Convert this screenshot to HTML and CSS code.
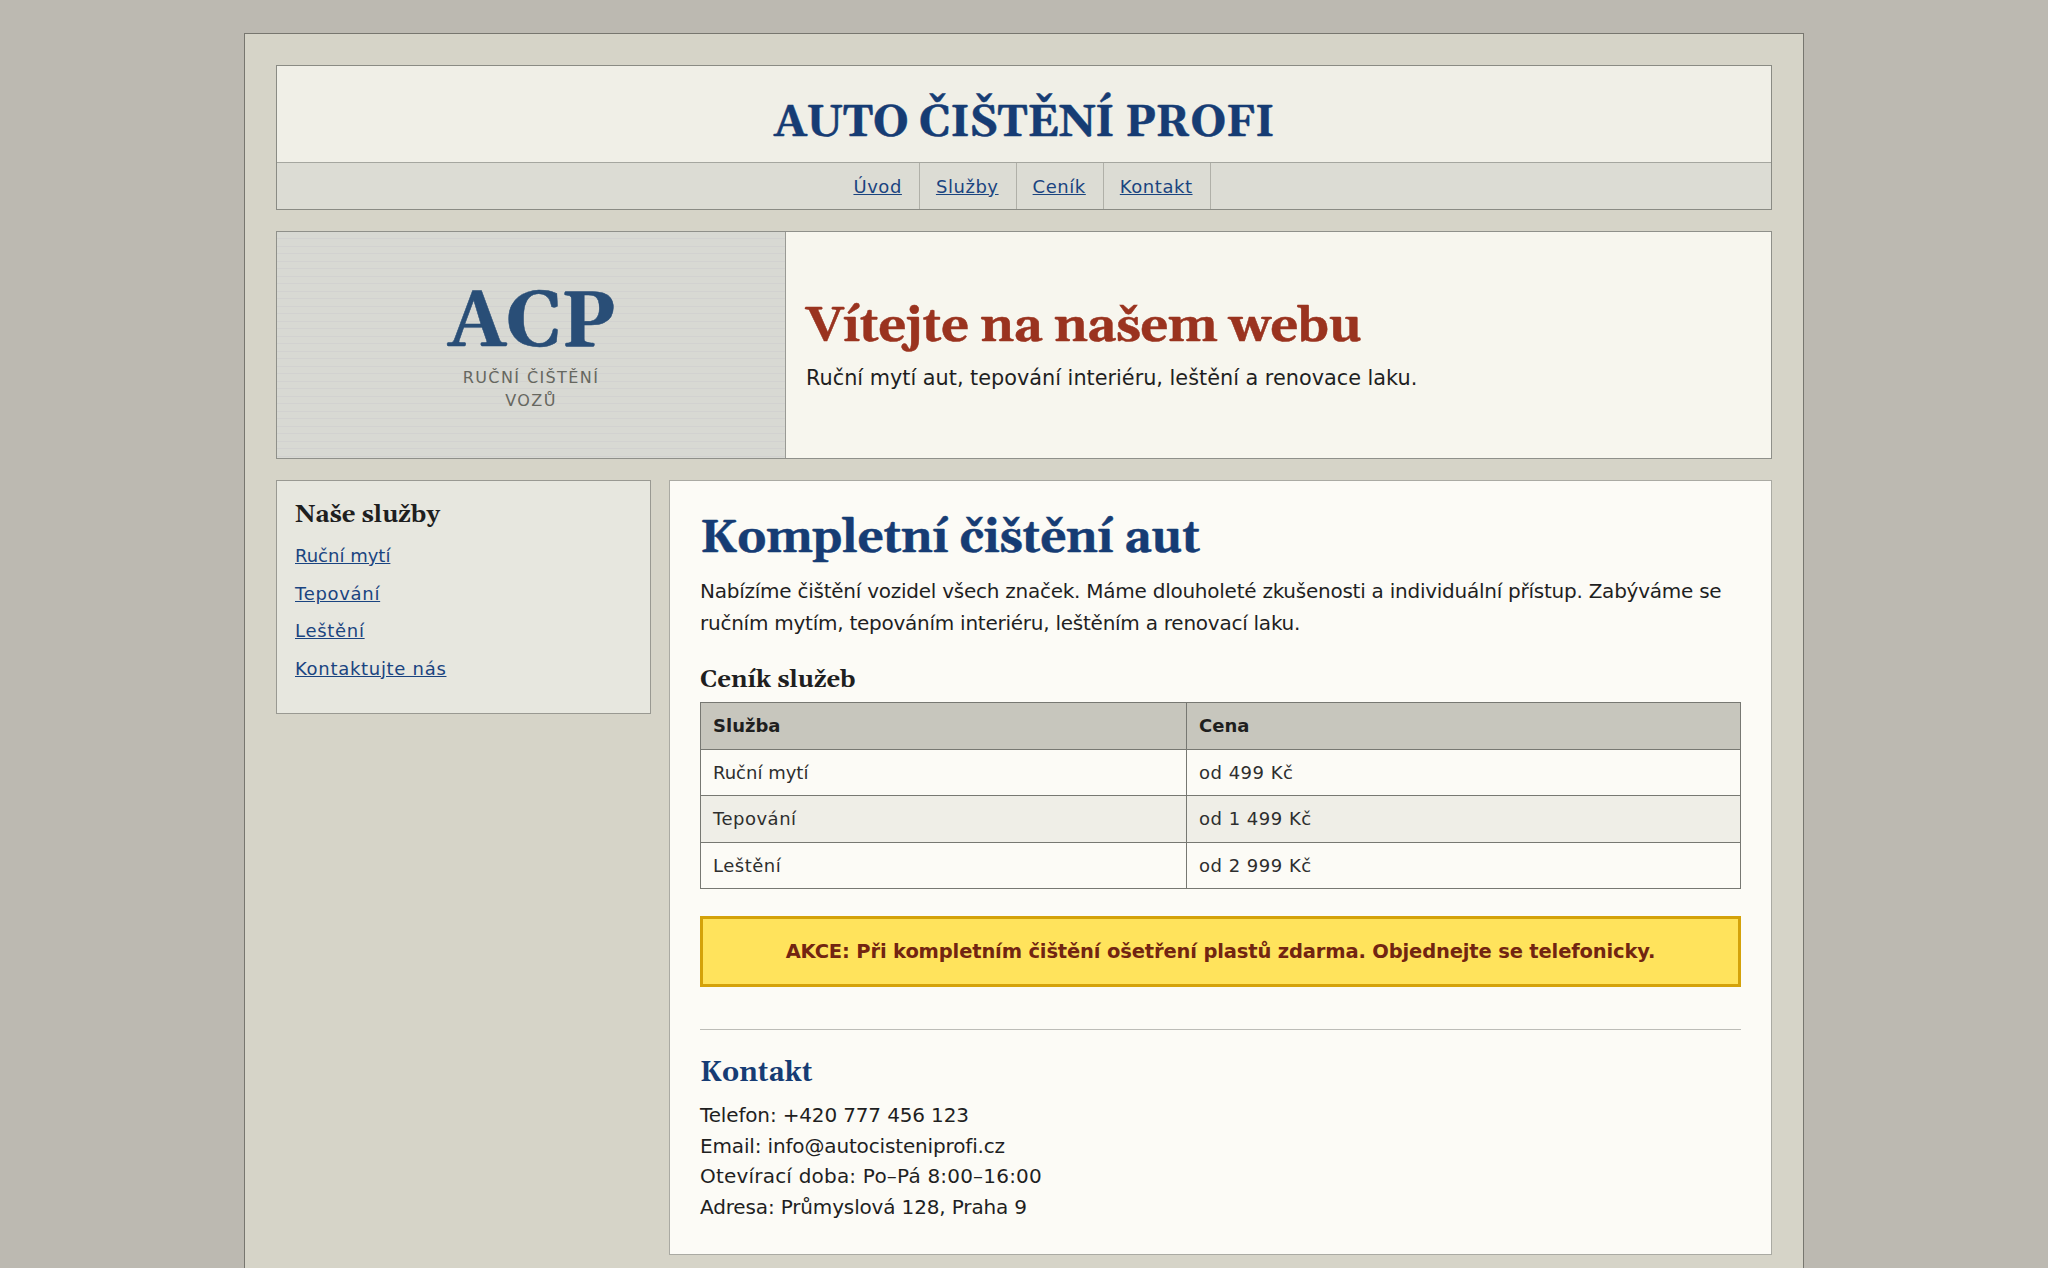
FILE: index.html
```html
<!DOCTYPE html>
<html lang="cs">
<head>
  <meta charset="UTF-8">
  <meta name="viewport" content="width=device-width, initial-scale=1.0">
  <title>Auto čištění Profi</title>
  <link rel="stylesheet" href="styles.css">
</head>
<body>
  <div class="page">
    <header class="header">
      <h1>AUTO ČIŠTĚNÍ PROFI</h1>
      <nav class="nav">
        <a href="#">Úvod</a>
        <a href="#sluzby">Služby</a>
        <a href="#cenik">Ceník</a>
        <a href="#kontakt">Kontakt</a>
      </nav>
    </header>

    <section class="hero">
      <div class="hero-logo">
        <div class="logo">ACP</div>
        <div class="logo-text">RUČNÍ ČIŠTĚNÍ<br>VOZŮ</div>
      </div>
      <div class="hero-text">
        <h2>Vítejte na našem webu</h2>
        <p>Ruční mytí aut, tepování interiéru, leštění a renovace laku.</p>
      </div>
    </section>

    <div class="columns">
      <aside class="sidebar">
        <h3>Naše služby</h3>
        <ul>
          <li><a href="#" class="tight">Ruční mytí</a></li>
          <li><a href="#">Tepování</a></li>
          <li><a href="#">Leštění</a></li>
          <li><a href="#kontakt">Kontaktujte nás</a></li>
        </ul>
      </aside>

      <main class="content">
        <h2 id="sluzby">Kompletní čištění aut</h2>
        <p class="intro">Nabízíme čištění vozidel všech značek. Máme dlouholeté zkušenosti a individuální přístup. Zabýváme se<br>ručním mytím, tepováním interiéru, leštěním a renovací laku.</p>

        <h3 id="cenik">Ceník služeb</h3>
        <table>
          <tr><th>Služba</th><th>Cena</th></tr>
          <tr><td class="tight">Ruční mytí</td><td>od 499 Kč</td></tr>
          <tr><td>Tepování</td><td>od 1 499 Kč</td></tr>
          <tr><td>Leštění</td><td>od 2 999 Kč</td></tr>
        </table>

        <div class="akce">AKCE: Při kompletním čištění ošetření plastů zdarma. Objednejte se telefonicky.</div>

        <div class="kontakt" id="kontakt">
          <h3>Kontakt</h3>
          <p>Telefon: +420 777 456 123</p>
          <p>Email: info@autocisteniprofi.cz</p>
          <p class="hours">Otevírací doba: Po–Pá 8:00–16:00</p>
          <p>Adresa: Průmyslová 128, Praha 9</p>
        </div>
      </main>
    </div>
  </div>
</body>
</html>
```
FILE: styles.css
```css
* {
  box-sizing: border-box;
}

body {
  margin: 0;
  padding-top: 33px;
  height: 100vh;
  overflow: hidden;
  background: #bcb9b1;
  color: #1f1f1f;
  font-family: Verdana, "DejaVu Sans", sans-serif;
  font-size: 20px;
  line-height: 31px;
}

h1, h2, h3, p, ul {
  margin: 0;
  padding: 0;
}

h1, h2, h3, .logo {
  font-family: Georgia, Gelasio, "Liberation Serif", serif;
  font-weight: bold;
}

h1, h2, .logo {
  -webkit-text-stroke: 0.5px;
}

a {
  color: #1a4480;
}

.page {
  width: 1560px;
  height: 100%;
  margin: 0 auto;
  padding: 31px 31px 0;
  background: #d6d4c8;
  border: 1px solid #77766f;
  border-bottom: none;
}

.header {
  height: 145px;
  background: #f0efe7;
  border: 1px solid #8a8b84;
}

.header h1 {
  height: 96px;
  padding-top: 31px;
  color: #163c74;
  font-size: 44px;
  line-height: 52px;
  letter-spacing: -0.4px;
  text-align: center;
}

.nav {
  display: flex;
  justify-content: center;
  height: 47px;
  background: #dcdcd4;
  border-top: 1px solid #a5a69f;
}

.nav a {
  padding: 8px 17px 0 16px;
  border-right: 1px solid #b0b0a8;
  font-size: 18px;
  letter-spacing: 0.55px;
}

.hero {
  display: flex;
  height: 228px;
  margin-top: 21px;
  background: #f7f6ee;
  border: 1px solid #8f908a;
}

.hero-logo {
  width: 509px;
  padding-top: 49px;
  background: repeating-linear-gradient(#d8d9d3 0 6.2px, #d2d2d0 6.2px 7.5px);
  border-right: 1px solid #999a94;
  text-align: center;
}

.logo {
  color: #294e77;
  font-size: 78px;
  line-height: 86px;
  letter-spacing: -0.8px;
}

.logo-text {
  color: #66675f;
  font-size: 16px;
  line-height: 22.5px;
  letter-spacing: 1.4px;
}

.hero-text {
  padding: 65px 20px 0;
}

.hero-text h2 {
  color: #9a331f;
  font-size: 49px;
  line-height: 60px;
  letter-spacing: -0.6px;
}

.hero-text p {
  padding-top: 6px;
  font-size: 20.8px;
}

.columns {
  display: flex;
  align-items: flex-start;
  gap: 18px;
  margin-top: 21px;
}

.sidebar {
  flex: none;
  width: 375px;
  height: 234px;
  padding: 17px 18px 0;
  background: #e7e7df;
  border: 1px solid #999992;
}

.sidebar h3 {
  font-size: 24px;
  line-height: 34px;
}

.sidebar ul {
  padding-top: 8px;
  list-style: none;
}

.sidebar li {
  height: 37.5px;
  font-size: 18px;
  letter-spacing: 0.7px;
}

.content {
  flex: 1;
  height: 775px;
  padding: 30px 30px 0;
  background: #fcfbf6;
  border: 1px solid #aaaaa3;
}

.content h2 {
  color: #163c74;
  font-size: 46px;
  line-height: 56px;
  letter-spacing: -0.45px;
}

.content h3 {
  font-size: 24px;
  line-height: 30px;
}

.intro {
  margin: 9px 0 26px;
  line-height: 31.5px;
  letter-spacing: -0.25px;
  white-space: nowrap;
}

table {
  width: 100%;
  margin-top: 7px;
  border-collapse: collapse;
  font-size: 18px;
}

th, td {
  height: 46.5px;
  padding: 0 12px;
  border: 1px solid #777872;
  text-align: left;
}

th {
  background: #c7c6bd;
}

td {
  color: #2e2e2e;
  letter-spacing: 0.5px;
}

th:first-child {
  width: 486px;
}

tr:nth-child(3) {
  background: #efeee7;
}

.tight {
  letter-spacing: 0;
}

.akce {
  height: 71px;
  margin-top: 27px;
  padding-top: 17px;
  background: #ffe35c;
  border: 3px solid #d4a20a;
  color: #722511;
  font-size: 19.5px;
  font-weight: bold;
  letter-spacing: -0.15px;
  text-align: center;
}

.kontakt {
  margin-top: 42px;
  padding-top: 26px;
  border-top: 1px solid #bcbcb7;
}

.content .kontakt h3 {
  margin-bottom: 10px;
  color: #163c74;
  font-size: 27px;
  line-height: 34px;
}

.kontakt p {
  line-height: 30.5px;
  letter-spacing: -0.15px;
}

.kontakt .hours {
  letter-spacing: 0.2px;
}
```
